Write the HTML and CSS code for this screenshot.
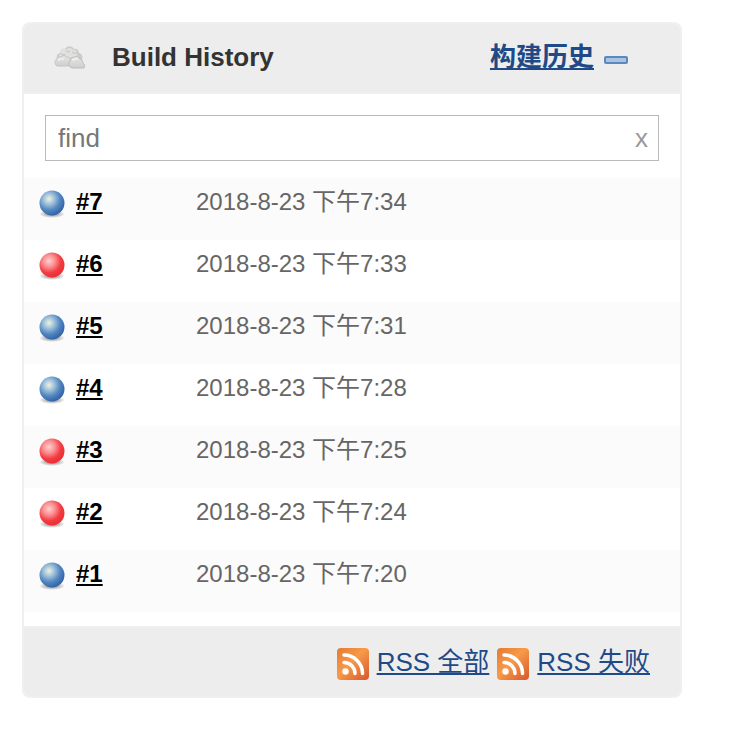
FILE: index.html
```
<!DOCTYPE html>
<html lang="zh-CN">
<head>
    <meta charset="UTF-8">
    <meta name="viewport" content="width=device-width, initial-scale=1.0">
    <title>Build History</title>
    <link rel="stylesheet" href="styles.css">
</head>
<body>
    <!-- shared icons -->
    <svg class="sprite" width="0" height="0" aria-hidden="true">
        <defs>
            <radialGradient id="blueFill" cx="0.38" cy="0.34" r="0.68">
                <stop offset="0" stop-color="#eef3dc"/>
                <stop offset="0.3" stop-color="#a5c4dc"/>
                <stop offset="0.65" stop-color="#5287c0"/>
                <stop offset="1" stop-color="#2f62a8"/>
            </radialGradient>
            <radialGradient id="redFill" cx="0.38" cy="0.34" r="0.68">
                <stop offset="0" stop-color="#ffd0d0"/>
                <stop offset="0.35" stop-color="#fb9092"/>
                <stop offset="0.7" stop-color="#f23c42"/>
                <stop offset="1" stop-color="#ee2c34"/>
            </radialGradient>
            <radialGradient id="shadowFill">
                <stop offset="0" stop-color="#555" stop-opacity="0.8"/>
                <stop offset="1" stop-color="#555" stop-opacity="0"/>
            </radialGradient>
            <linearGradient id="rssFill" x1="0" y1="0" x2="1" y2="1">
                <stop offset="0" stop-color="#e27a35"/>
                <stop offset="0.45" stop-color="#f79a48"/>
                <stop offset="1" stop-color="#d4572e"/>
            </linearGradient>
            <linearGradient id="cloudFill" x1="0" y1="0" x2="0" y2="1">
                <stop offset="0" stop-color="#e6e6e4"/>
                <stop offset="1" stop-color="#cecece"/>
            </linearGradient>
        </defs>
        <symbol id="ball-blue" viewBox="0 0 28 30">
            <ellipse cx="14" cy="25" rx="13" ry="4" fill="url(#shadowFill)"/>
            <circle cx="14" cy="14" r="12.500" fill="url(#blueFill)"/>
        </symbol>
        <symbol id="ball-red" viewBox="0 0 28 30">
            <ellipse cx="14" cy="25" rx="13" ry="4" fill="url(#shadowFill)"/>
            <circle cx="14" cy="14" r="12.500" fill="url(#redFill)"/>
        </symbol>
        <symbol id="rss" viewBox="0 0 32 32">
            <rect width="32" height="32" rx="4" fill="url(#rssFill)"/>
            <circle cx="8.500" cy="23.500" r="3.200" fill="#fff"/>
            <path d="M7 14.500a11 11 0 0 1 11 11M7 7a18.500 18.500 0 0 1 18.500 18.500" fill="none" stroke="#fff" stroke-width="3.500" stroke-linecap="round"/>
        </symbol>
    </svg>

    <div class="panel">
        <div class="panel-header">
            <svg class="weather" viewBox="0 0 32 24" aria-hidden="true">
                <!-- back, left and right clouds -->
                <path d="M4 15a4 4 0 0 1 2-7a4 4 0 0 1 5-4a5 5 0 0 1 9 0a4 4 0 0 1 5 4a4 4 0 0 1 3 6v5H6z" fill="#cbcbc9"/>
                <path d="M5 13a3 3 0 0 1 2-4a3 3 0 0 1 5-4a4 4 0 0 1 7 0a3 3 0 0 1 4 3v5H9z" fill="#e0e0de"/>
                <path d="M7 9q2 2 4 0M12 6q2 2 4 0M18 7q2 2 5 1" fill="none" stroke="#c2c2c0" stroke-width="1"/>
                <path d="M3 21a4 4 0 0 1-1-6a4 4 0 0 1 5-3a4 4 0 0 1 6 0q5 1 4 6q0 3-3 3z" fill="url(#cloudFill)" stroke="#c4c4c2" stroke-width="1"/>
                <path d="M16 22q-3-3 0-6q0-4 4-4q4-2 6 2q3 1 3 4q3 2 1 5H18z" fill="url(#cloudFill)" stroke="#bdbdbb" stroke-width="1"/>
                <path d="M5 15q2-2 4-1M19 15q2-2 4-1" fill="none" stroke="#eee" stroke-width="2" stroke-linecap="round"/>
            </svg>
            <h1 class="title">Build History</h1>
            <a class="trend" href="#">构建历史</a>
            <button class="collapse" type="button" aria-label="Collapse"></button>
        </div>

        <div class="search">
            <input class="search-input" type="text" placeholder="find" aria-label="find">
            <button class="clear" type="button">x</button>
        </div>

        <table class="builds">
            <tr>
                <td class="build"><svg class="ball"><use href="#ball-blue"/></svg><a href="#">#7</a></td>
                <td>2018-8-23 下午7:34</td>
            </tr>
            <tr>
                <td class="build"><svg class="ball"><use href="#ball-red"/></svg><a href="#">#6</a></td>
                <td>2018-8-23 下午7:33</td>
            </tr>
            <tr>
                <td class="build"><svg class="ball"><use href="#ball-blue"/></svg><a href="#">#5</a></td>
                <td>2018-8-23 下午7:31</td>
            </tr>
            <tr>
                <td class="build"><svg class="ball"><use href="#ball-blue"/></svg><a href="#">#4</a></td>
                <td>2018-8-23 下午7:28</td>
            </tr>
            <tr>
                <td class="build"><svg class="ball"><use href="#ball-red"/></svg><a href="#">#3</a></td>
                <td>2018-8-23 下午7:25</td>
            </tr>
            <tr>
                <td class="build"><svg class="ball"><use href="#ball-red"/></svg><a href="#">#2</a></td>
                <td>2018-8-23 下午7:24</td>
            </tr>
            <tr>
                <td class="build"><svg class="ball"><use href="#ball-blue"/></svg><a href="#">#1</a></td>
                <td>2018-8-23 下午7:20</td>
            </tr>
        </table>

        <div class="panel-footer">
            <svg class="rss"><use href="#rss"/></svg>
            <a href="#">RSS 全部</a>
            <svg class="rss"><use href="#rss"/></svg>
            <a href="#">RSS 失败</a>
        </div>
    </div>
</body>
</html>
```
FILE: styles.css
```
* {
    box-sizing: border-box;
}

body {
    margin: 0;
    padding: 22px 56px 22px 22px;
    background-color: #fff;
    color: #333;
    font-family: "Liberation Sans", "Noto Sans CJK SC", sans-serif;
    font-size: 26px;
    line-height: 32px;
}

.sprite {
    position: absolute;
}

a {
    color: #204a87;
    text-decoration: underline;
    text-decoration-thickness: 2px;
    text-underline-offset: 2px;
    text-decoration-skip-ink: none;
}

button {
    padding: 0;
    border: none;
    background: none;
    font-family: inherit;
    cursor: pointer;
}

.panel {
    border: 2px solid #f0f0f0;
    border-radius: 8px;
    overflow: hidden;
}

.panel-header {
    display: flex;
    align-items: center;
    height: 70px;
    padding: 0 52px 2px 30px;
    background-color: #ededed;
    border-bottom: 2px solid #f0f0f0;
}

.weather {
    width: 32px;
    height: 24px;
    margin-right: 26px;
}

.title {
    flex: 1;
    margin: 0;
    font-size: 26px;
    font-weight: bold;
}

.trend {
    font-weight: bold;
}

.collapse {
    width: 24px;
    height: 8px;
    margin: 6px 0 0 10px;
    border: 2px solid #5d88bd;
    border-radius: 2px;
    background-color: #a9c3e3;
}

.search {
    display: flex;
    align-items: center;
    height: 46px;
    margin: 21px 21px 17px;
    padding: 0 10px 0 12px;
    border: 1px solid #bbb;
}

.search-input {
    flex: 1;
    min-width: 0;
    padding: 0;
    border: none;
    outline: none;
    background: none;
    font-family: inherit;
    font-size: 26px;
}

.search-input::placeholder {
    color: #777;
}

.clear {
    color: #999;
    font-size: 26px;
}

.builds {
    width: 100%;
    margin-bottom: 14px;
    border-collapse: collapse;
    table-layout: fixed;
    color: #666;
    font-size: 24px;
}

.builds tr:nth-child(odd) {
    background-color: #fbfbfb;
}

.builds td {
    height: 62px;
    padding: 8px 0 0;
    vertical-align: top;
}

.builds .build {
    width: 172px;
    padding-left: 14px;
}

.build a {
    color: #000;
    font-weight: bold;
}

.ball {
    float: left;
    width: 28px;
    height: 30px;
    margin: 3px 10px 0 0;
}

.panel-footer {
    display: flex;
    align-items: center;
    justify-content: flex-end;
    gap: 8px;
    height: 70px;
    padding: 0 30px 0 0;
    background-color: #ededed;
    border-top: 2px solid #f0f0f0;
}

.rss {
    width: 32px;
    height: 32px;
    margin-top: 4px;
}
```
